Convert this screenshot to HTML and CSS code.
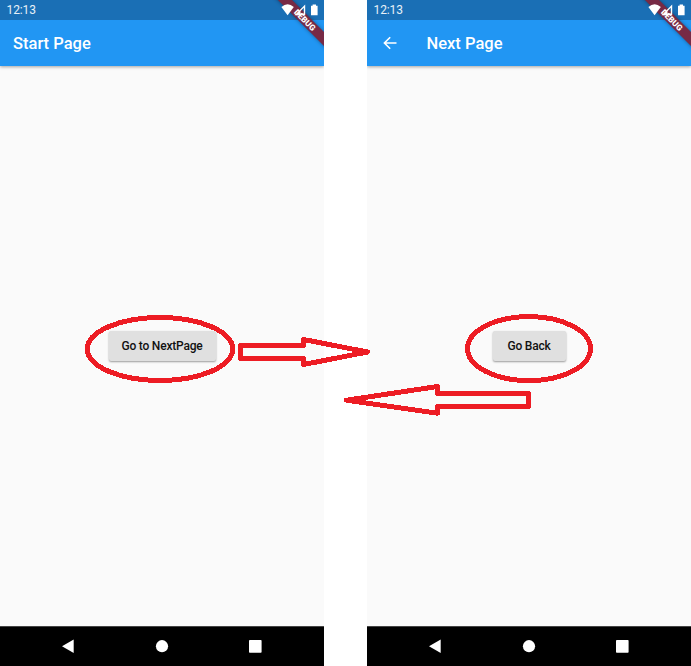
FILE: index.html
```html
<!DOCTYPE html>
<html lang="en">
<head>
<meta charset="utf-8">
<title>Page navigation</title>
<link rel="stylesheet" href="styles.css">
</head>
<body>
<svg class="defs" width="0" height="0" aria-hidden="true">
  <symbol id="system" viewBox="0 0 48 20">
    <path fill="#fff" d="M3.4 7Q9.6 1.6 15.8 7L9.6 15.2Z"/>
    <path fill="#fff" fill-rule="evenodd" d="M27.2 4.6V15.2H16.6ZM25.8 7.8L22.4 11.2V13.5H25.8Z"/>
    <path fill="#fff" d="M33 5.8H34.6V4.5H38V5.8H39.6V15.2H33Z"/>
  </symbol>
  <symbol id="nav" viewBox="0 0 324 40">
    <path fill="#fff" d="M62 20.3L73.7 13.6V27Z"/>
    <circle cx="162" cy="20.2" r="6.1" fill="#fff"/>
    <rect x="249" y="14" width="12.6" height="12.7" rx=".8" fill="#fff"/>
  </symbol>
</svg>
<main class="stage">
  <section class="phone">
    <header class="top">
      <div class="status"><span class="time">12:13</span></div>
      <div class="appbar"><h1 class="title">Start Page</h1></div>
      <div class="banner"><span class="ribbon">DEBUG</span></div>
      <svg class="system"><use href="#system"/></svg>
    </header>
    <div class="content"><button class="button wide">Go to NextPage</button></div>
    <footer class="nav"><svg width="324" height="40"><use href="#nav"/></svg></footer>
  </section>
  <section class="phone">
    <header class="top">
      <div class="status"><span class="time">12:13</span></div>
      <div class="appbar">
        <svg class="back" width="14" height="14" viewBox="0 0 14 14"><path d="M13.5 7H1.6M7.2 1.2L1.4 7L7.2 12.8" fill="none" stroke="#fff" stroke-width="1.6"/></svg>
        <h1 class="title">Next Page</h1>
      </div>
      <div class="banner"><span class="ribbon">DEBUG</span></div>
      <svg class="system"><use href="#system"/></svg>
    </header>
    <div class="content"><button class="button">Go Back</button></div>
    <footer class="nav"><svg width="324" height="40"><use href="#nav"/></svg></footer>
  </section>
  <svg class="marks" width="691" height="666" viewBox="0 0 691 666" shape-rendering="crispEdges">
    <ellipse cx="160" cy="349" rx="72.7" ry="31.5"/>
    <ellipse cx="529" cy="348.6" rx="61.5" ry="32"/>
    <path d="M240.4 345.4H303.6V339.5L367.5 352L303.6 364.5V358.4H240.4Z"/>
    <path d="M528.4 393.5H437.6V386.5L346.5 400.2L437.6 413.2V406.4H528.4Z"/>
  </svg>
</main>
</body>
</html>
```
FILE: styles.css
```css
* { box-sizing: border-box; }
body { margin: 0; background: #fff; font-family: Roboto, sans-serif; }
.defs { position: absolute; }
.stage { position: relative; width: 691px; height: 666px; display: flex; gap: 43px; overflow: hidden; }
.phone { width: 324px; height: 666px; display: flex; flex-direction: column; background: #fafafa; overflow: hidden; }
.top { position: relative; height: 66px; box-shadow: 0 1px 3px rgba(0, 0, 0, .35); flex: none; }
.status { height: 20px; padding-left: 6.5px; background: #1a6fb5; color: #e8f1f8; font-size: 12px; line-height: 21px; letter-spacing: -.1px; }
.appbar { height: 46px; padding-left: 13px; display: flex; align-items: center; background: #2196f3; color: #fff; }
.title { margin: 0; font-size: 16.5px; line-height: 20px; font-weight: 500; padding-top: 1px; }
.back { margin: 0 29.5px 0 3px; }
.banner { position: absolute; inset: 0; overflow: hidden; }
.ribbon { position: absolute; left: 264.5px; top: 15px; width: 80px; height: 10px; background: #772a45; color: #fff; font-size: 8.2px; font-weight: 900; line-height: 10px; text-align: center; transform: rotate(45deg); box-shadow: 0 0 4px rgba(0, 0, 0, .4); }
.system { position: absolute; left: 278px; top: 0; width: 48px; height: 20px; }
.content { flex: 1; display: flex; justify-content: center; align-items: center; }
.button { width: 73px; height: 30px; padding: 0; border: 0; border-radius: 2px; background: #e0e0e0; color: #111; font: 500 12px/30px Roboto, sans-serif; letter-spacing: -.2px; box-shadow: 0 1px 2px rgba(0, 0, 0, .38); }
.wide { width: 107px; }
.nav { height: 40px; background: #000; border-top: 1px solid #444; flex: none; }
.nav svg { display: block; margin-top: -1px; }
.marks { position: absolute; left: 0; top: 0; pointer-events: none; fill: none; stroke: #ed1c24; stroke-width: 5; stroke-linejoin: round; }
```
